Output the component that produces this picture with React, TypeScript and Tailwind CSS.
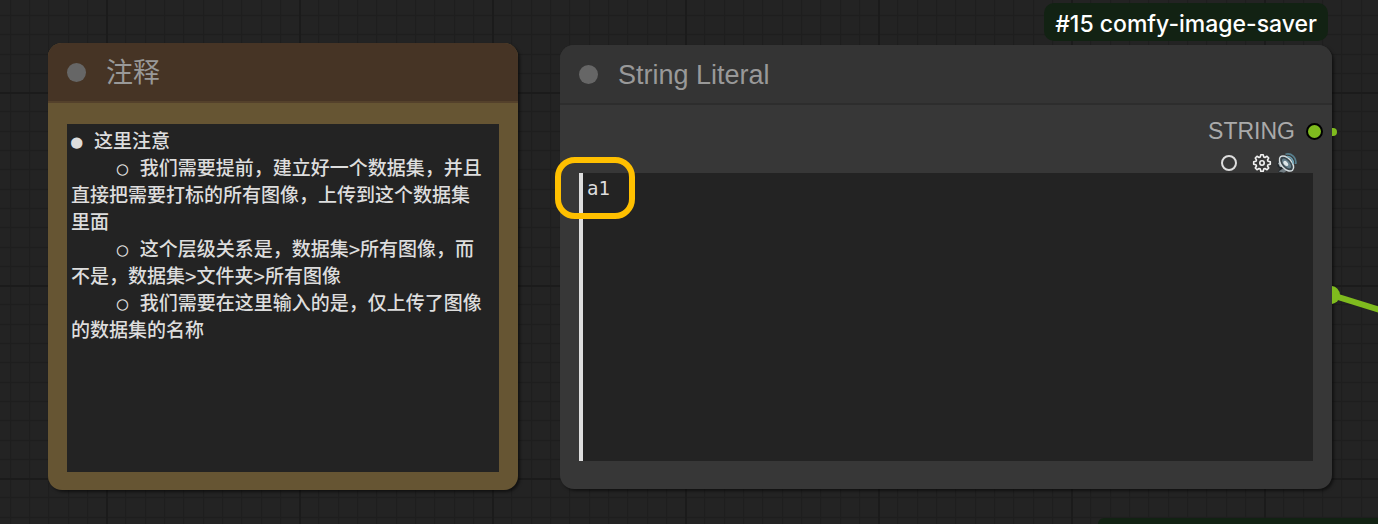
import {useState} from 'react';
import type {ReactNode} from 'react';
import clsx from 'clsx';

const NOTE_TEXT = [
  '● 这里注意',
  '    ○ 我们需要提前，建立好一个数据集，并且直接把需要打标的所有图像，上传到这个数据集里面',
  '    ○ 这个层级关系是，数据集>所有图像，而不是，数据集>文件夹>所有图像',
  '    ○ 我们需要在这里输入的是，仅上传了图像的数据集的名称'
].join('\n');

const editor = "block w-full resize-none overflow-hidden bg-[#232323] font-['DejaVu_Sans_Mono','Noto_Sans_CJK_SC',monospace] text-[19px] leading-[27px] font-medium text-[#dddddd] outline-none";

function CanvasGrid() {
  return (
    <svg className="absolute inset-0 h-full w-full" aria-hidden="true">
      <defs>
        <pattern id="grid" x="106" y="92" width="193" height="193" patternUnits="userSpaceOnUse">
          <path
            d="M19.5 0V193M39.5 0V193M58.5 0V193M77.5 0V193M97.5 0V193M116.5 0V193M135.5 0V193M155.5 0V193M174.5 0V193M0 19.5H193M0 39.5H193M0 58.5H193M0 77.5H193M0 97.5H193M0 116.5H193M0 135.5H193M0 155.5H193M0 174.5H193"
            stroke="#1e1e1e"
            strokeWidth="1.4"
          />
          <path d="M1 0V193M0 1H193" stroke="#1b1b1b" strokeWidth="2" />
        </pattern>
      </defs>
      <rect width="100%" height="100%" fill="url(#grid)" />
    </svg>
  );
}

function GearIcon() {
  return (
    <svg width="20" height="20" viewBox="0 0 20 20" fill="none" stroke="#f0f0f0" strokeWidth="1.6" strokeLinejoin="round" aria-hidden="true">
      <path d="M8.8 1.7h2.4l.5 2.2 1.3.6 2-1.2 1.7 1.7-1.2 2 .6 1.3 2.2.5v2.4l-2.2.5-.6 1.3 1.2 2-1.7 1.7-2-1.2-1.3.6-.5 2.2H8.8l-.5-2.2-1.3-.6-2 1.2L3.300 15l1.2-2-.6-1.3-2.2-.5V8.800l2.200-.5.6-1.300-1.200-2L5 3.300l2 1.200 1.300-.6z" />
      <circle cx="10" cy="10" r="2.200" />
    </svg>
  );
}

function SpeakerIcon() {
  return (
    <svg width="22" height="22" viewBox="0 0 22 22" fill="none" aria-hidden="true">
      <path d="M1.5 10 6 6l6 11-5 4-5-1 2-3.500-2.500-2z" fill="#20262a" />
      <path d="M2 11 5.500 9l2.500 5.500-4 .5z" fill="#a3adb2" />
      <path d="M2.500 19.500 7 16.500l4 2-3 2.300z" fill="#727d83" />
      <g transform="rotate(48 10.500 11.500)">
        <ellipse cx="10.500" cy="11.500" rx="9" ry="5.200" fill="#39454c" stroke="#d5dde0" strokeWidth="1.500" />
        <ellipse cx="10.500" cy="11.500" rx="6" ry="3" fill="#66808c" />
        <ellipse cx="10" cy="12" rx="3" ry="1.800" fill="#dfe7ea" />
      </g>
      <path d="M11 4.500c3.500-.2 6.500 3 6.500 7.500" stroke="#6fa3b5" strokeWidth="1.600" />
      <path d="M9.500 2.200c6-1.700 11 3.500 10.300 9.800" stroke="#58808f" strokeWidth="1.600" />
    </svg>
  );
}

type NodeProps = {
  title: string;
  className: string;
  headerClass: string;
  children: ReactNode;
};

function GraphNode({title, className, headerClass, children}: NodeProps) {
  return (
    <section className={clsx('relative rounded-[14px] shadow-[2px_2px_3px_rgba(0,0,0,0.5)]', className)}>
      <header className={clsx('flex h-[60px] items-center gap-5 rounded-t-[14px] border-b-2 pl-[19px]', headerClass)}>
        <button type="button" aria-label="Collapse node" className="size-[19px] rounded-full bg-[#666666]" />
        <h2 className="pt-0.5 font-['Liberation_Sans','Noto_Sans_CJK_SC',sans-serif] text-[27px] leading-8 text-[#999999]">{title}</h2>
      </header>
      {children}
    </section>
  );
}

function NoteNode() {
  const [note, setNote] = useState(NOTE_TEXT);

  return (
    <GraphNode title="注释" className="w-[470px] shrink-0 bg-[#665533]" headerClass="border-[#54412b] bg-[#463425]">
      <div className="px-[19px] pt-[21px] pb-[18px]">
        <textarea
          aria-label="注释"
          spellCheck={false}
          value={note}
          onChange={(e) => setNote(e.target.value)}
          className={clsx(editor, 'h-[348px] pt-1 pr-4 pl-1')}
        />
      </div>
    </GraphNode>
  );
}

function StringNode() {
  const [value, setValue] = useState('a1');

  return (
    <GraphNode title="String Literal" className="mt-0.5 min-w-0 flex-1 bg-[#373737]" headerClass="border-[#2d2d2d] bg-[#343434]">
      <span className="absolute -top-[42px] right-1 rounded-[10px] bg-[#122213] px-[11px] pt-1.5 pb-0.5 font-['Inter',sans-serif] text-[23px] leading-[30px] font-medium whitespace-nowrap text-white">
        #15 comfy-image-saver
      </span>

      <div className="flex h-[52px] items-center justify-end gap-[11px] pr-[9px]">
        <span className="font-['Liberation_Sans',sans-serif] text-[23px] leading-7 text-[#aaaaaa]">STRING</span>
        <span className="size-[17px] rounded-full border-2 border-black bg-[#7fbb1e]" />
      </div>
      <div className="-mt-1 flex h-5 items-center justify-end pr-[34px]">
        <button type="button" aria-label="Status" className="mr-[15px] size-4 rounded-full border-2 border-[#dddddd]" />
        <button type="button" aria-label="Settings" className="mr-1">
          <GearIcon />
        </button>
        <button type="button" aria-label="Read aloud">
          <SpeakerIcon />
        </button>
      </div>

      <div className="px-[19px] pb-7">
        <textarea
          aria-label="String"
          spellCheck={false}
          value={value}
          onChange={(e) => setValue(e.target.value)}
          className={clsx(editor, 'h-72 border-l-4 border-[#dddddd] px-1 pt-0.5')}
        />
      </div>

      {/* highlight frame around the value */}
      <span className="pointer-events-none absolute top-28 -left-[5px] h-[62px] w-20 rounded-[20px] border-6 border-[#ffc000]" />

      {/* outgoing links */}
      <svg className="pointer-events-none absolute top-0 left-full h-full w-[46px]" aria-hidden="true">
        <circle cx="1" cy="87" r="4" fill="#7fbb1e" />
        <circle cx="-1" cy="250" r="9" fill="#7fbb1e" />
        <path d="M0 250 48 265" stroke="#7fbb1e" strokeWidth="6" />
      </svg>
    </GraphNode>
  );
}

export default function App() {
  return (
    <main className="relative flex min-h-screen items-start gap-[42px] overflow-hidden bg-[#232323] pt-[43px] pr-[46px] pl-12">
      <CanvasGrid />
      <NoteNode />
      <StringNode />
      {/* badge of the node below the visible area */}
      <span className="absolute right-0 bottom-0 h-1.5 w-[280px] rounded-tl-[10px] bg-[#122213]" />
    </main>
  );
}
